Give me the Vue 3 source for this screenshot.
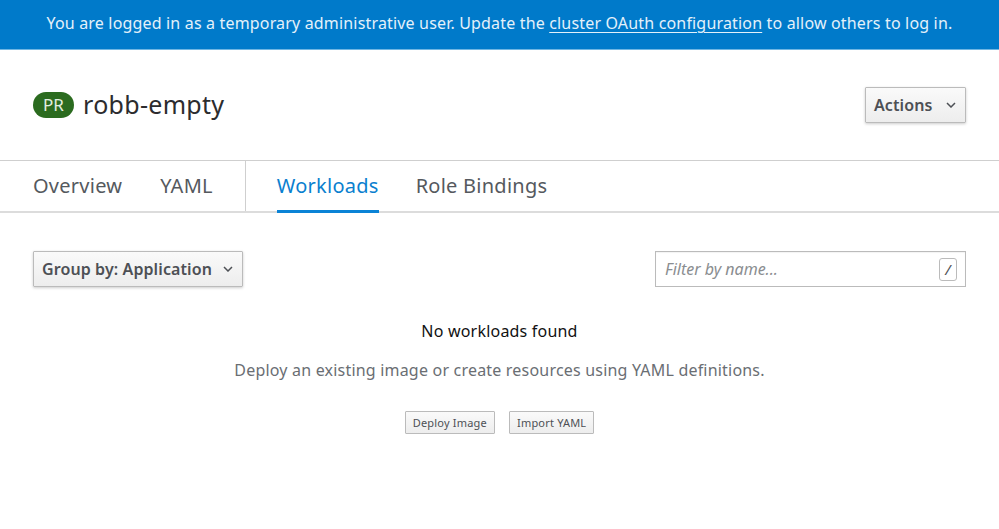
<template>
  <div class="page">
    <div class="banner">
      You are logged in as a temporary administrative user. Update the
      <a class="banner-link">cluster OAuth configuration</a>
      to allow others to log in.
    </div>

    <header class="title-row">
      <h1 class="title">
        <span class="badge">PR</span>
        <span class="name">robb-empty</span>
      </h1>
      <button class="btn btn-actions">
        Actions
        <svg class="caret" viewBox="0 0 10 6" width="10" height="6"><path d="M1 1l4 4 4-4" /></svg>
      </button>
    </header>

    <nav class="tabs">
      <a class="tab tab-overview">Overview</a>
      <a class="tab tab-yaml">YAML</a>
      <span class="tab-divider"></span>
      <a class="tab tab-workloads active">Workloads</a>
      <a class="tab">Role Bindings</a>
    </nav>

    <section class="toolbar">
      <button class="btn btn-group">
        Group by: Application
        <svg class="caret" viewBox="0 0 10 6" width="10" height="6"><path d="M1 1l4 4 4-4" /></svg>
      </button>
      <div class="filter">
        <span class="filter-text">Filter by name...</span>
        <span class="slash">/</span>
      </div>
    </section>

    <section class="empty">
      <h2 class="empty-title">No workloads found</h2>
      <p class="empty-text">Deploy an existing image or create resources using YAML definitions.</p>
      <div class="empty-actions">
        <button class="btn-small">Deploy Image</button>
        <button class="btn-small">Import YAML</button>
      </div>
    </section>
  </div>
</template>

<script setup>
</script>

<style>
html,
body {
  margin: 0;
  background: #fff;
}
</style>

<style scoped>
.page {
  width: 999px;
  height: 529px;
  overflow: hidden;
  font-family: "Noto Sans", "Open Sans", sans-serif;
  color: #4d5258;
}

.banner {
  box-sizing: border-box;
  height: 50px;
  background: #007aca;
  border-bottom: 1px solid #6fb6e3;
  color: #e4f1fa;
  font-size: 16px;
  line-height: 47px;
  text-align: center;
  letter-spacing: 0.17px;
  white-space: nowrap;
}

.banner-link {
  color: #e4f1fa;
  text-decoration: underline;
  text-underline-offset: 3px;
  text-decoration-thickness: 1px;
}

.title-row {
  box-sizing: border-box;
  height: 110px;
  padding: 37px 33px 0;
  display: flex;
  justify-content: space-between;
  align-items: flex-start;
}

.title {
  margin: 0;
  display: flex;
  align-items: center;
  gap: 9px;
  height: 34px;
  font-weight: 400;
}

.badge {
  width: 41px;
  height: 26px;
  margin-top: 2px;
  border-radius: 13px;
  background: #2b6b1f;
  color: #e3eee0;
  font-size: 17px;
  line-height: 26px;
  text-align: center;
}

.name {
  font-size: 25px;
  color: #2c2c2e;
  letter-spacing: 0.3px;
}

.btn {
  box-sizing: border-box;
  display: flex;
  align-items: center;
  justify-content: space-between;
  height: 36px;
  padding: 0 9px 0 8px;
  border: 1px solid #bbb;
  border-radius: 1px;
  background: linear-gradient(#fafafa, #ededed);
  box-shadow: 0 1px 3px rgba(0, 0, 0, 0.2);
  color: #4d5055;
  font-family: inherit;
  font-size: 16px;
  font-weight: 600;
  letter-spacing: 0.1px;
  white-space: nowrap;
}

.btn-actions {
  width: 101px;
  margin-top: 0;
}

.btn-group {
  width: 210px;
}

.caret {
  fill: none;
  stroke: #4d5055;
  stroke-width: 1.5;
}

.tabs {
  box-sizing: border-box;
  height: 53px;
  display: flex;
  border-top: 1px solid #cfcfcf;
  border-bottom: 2px solid #dcdcdc;
  padding-left: 33px;
}

.tab {
  position: relative;
  font-size: 20px;
  line-height: 50px;
  color: #55595e;
  margin-right: 37px;
  letter-spacing: 0.25px;
  white-space: nowrap;
}

.tab-overview {
  margin-right: 38px;
}

.tab-yaml {
  margin-right: 32px;
}

.tab-divider {
  width: 1px;
  height: 50px;
  background: #cfcfcf;
  margin-right: 31px;
}

.tab.active {
  color: #0a7fcf;
}

.tab.active::after {
  content: "";
  position: absolute;
  left: 0;
  right: 0;
  bottom: -2px;
  height: 3px;
  background: #0a83d6;
}

.toolbar {
  display: flex;
  justify-content: space-between;
  padding: 38px 33px 0;
}

.filter {
  box-sizing: border-box;
  width: 311px;
  height: 36px;
  display: flex;
  align-items: center;
  justify-content: space-between;
  padding: 0 8px 0 9px;
  border: 1px solid #bbb;
  box-shadow: inset 0 1px 1px rgba(0, 0, 0, 0.05);
}

.filter-text {
  font-size: 16px;
  font-style: italic;
  color: #8a8d90;
}

.slash {
  box-sizing: border-box;
  width: 18px;
  height: 23px;
  border: 1px solid #bbb;
  border-radius: 3px;
  font-size: 15px;
  line-height: 20px;
  text-align: center;
  font-style: italic;
  color: #4d5055;
}

.empty {
  text-align: center;
}

.empty-title {
  margin: 33px 0 0;
  font-size: 16px;
  line-height: 22px;
  font-weight: 400;
  color: #111;
  letter-spacing: 0.2px;
}

.empty-text {
  margin: 17px 0 0;
  font-size: 16px;
  line-height: 22px;
  color: #6a6e73;
  letter-spacing: 0.2px;
}

.empty-actions {
  display: flex;
  justify-content: center;
  gap: 14px;
  margin-top: 30px;
}

.btn-small {
  box-sizing: border-box;
  height: 23px;
  padding: 0 7px;
  border: 1px solid #bbb;
  border-radius: 1px;
  background: linear-gradient(#fafafa, #ededed);
  color: #4d5055;
  font-family: inherit;
  font-size: 11px;
  letter-spacing: 0.2px;
}
</style>
